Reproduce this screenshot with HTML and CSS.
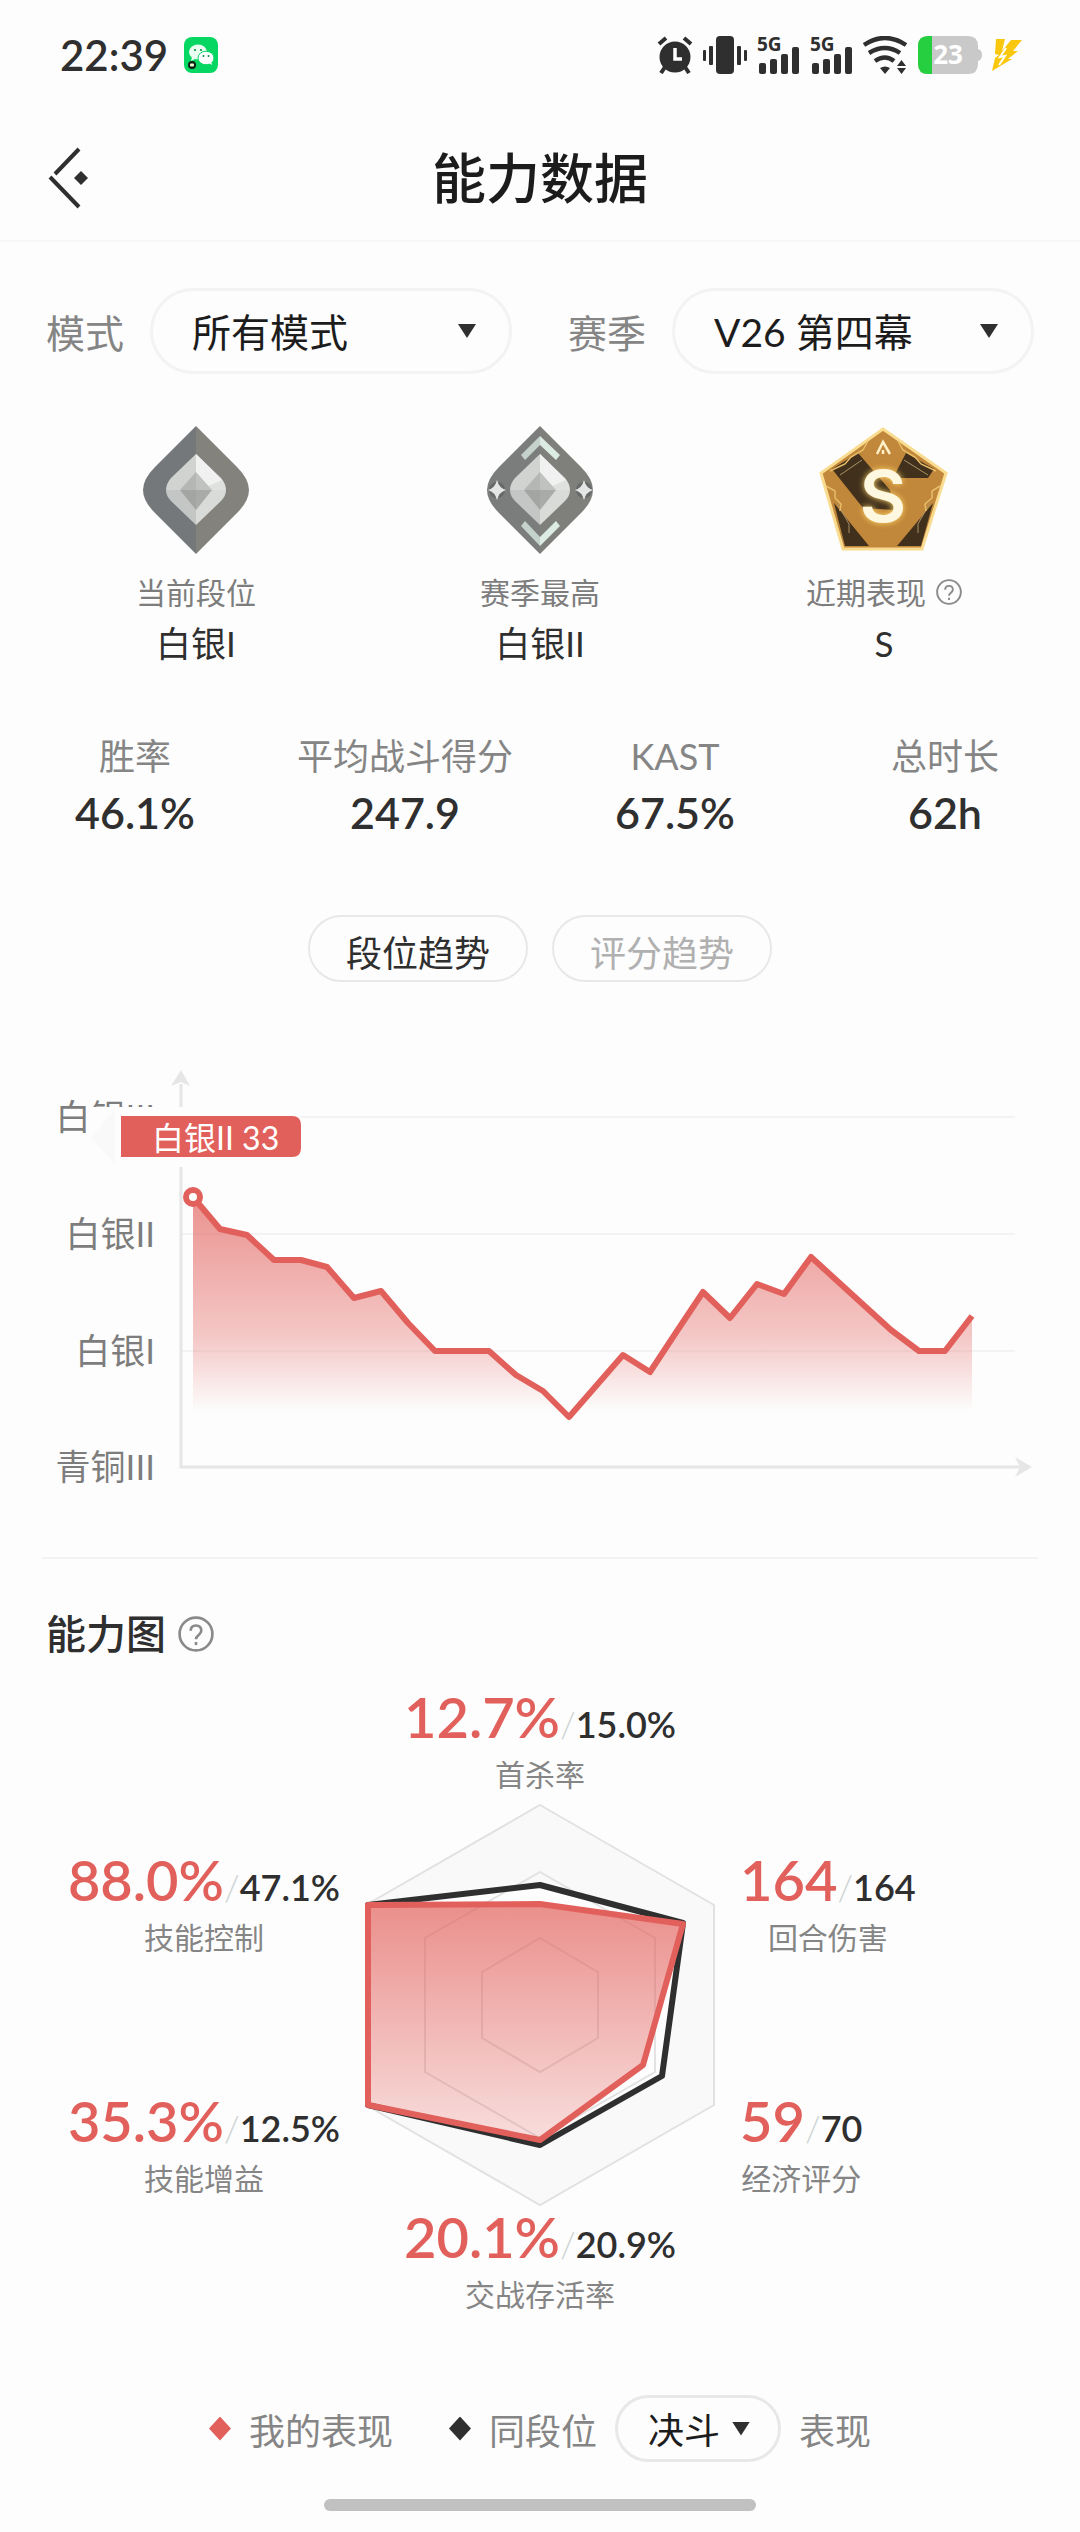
FILE: index.html
```html
<!DOCTYPE html>
<html lang="zh-CN">
<head>
    <meta charset="UTF-8">
    <meta name="viewport" content="width=device-width, initial-scale=1.0">
    <title>能力数据</title>
    <link rel="stylesheet" href="styles.css">
</head>
<body>
    <div class="status-bar">
        <span class="clock">22:39</span>
        <svg class="app-icon" width="34" height="36" viewBox="0 0 34 36">
            <rect width="34" height="36" rx="8" fill="#06d763"/>
            <ellipse cx="14" cy="15" rx="9" ry="7.5" fill="#e9fff2"/>
            <path d="M8 20l-1 4 4-2z" fill="#e9fff2"/>
            <ellipse cx="22" cy="21" rx="8" ry="6.8" fill="#fff" stroke="#06d763"/>
            <path d="M25 26l3 2-1-4z" fill="#fff"/>
            <g fill="#0a8f48">
                <circle cx="11" cy="13" r="1.1"/><circle cx="17" cy="13" r="1.1"/>
                <circle cx="19.5" cy="19" r="1"/><circle cx="24.5" cy="19" r="1"/>
            </g>
            <circle cx="8" cy="28" r="4" fill="#0b1f12"/>
            <rect x="6" y="26.500" width="4" height="3" rx="1" fill="#f4ffd0"/>
        </svg>

        <div class="status-icons">
            <svg width="36" height="38" viewBox="0 0 36 38">
                <g stroke="#2f2f2f" stroke-width="4" fill="none">
                    <path d="M2 8l7-6M34 8l-7-6M8 31l-4 6M28 31l4 6"/>
                </g>
                <circle cx="18" cy="21" r="15.500" fill="#2f2f2f"/>
                <path d="M18 12v11h7" stroke="#fff" stroke-width="3.500" fill="none"/>
            </svg>
            <svg width="44" height="38" viewBox="0 0 44 38" fill="#2f2f2f">
                <rect x="13" y="0" width="18" height="38" rx="4"/>
                <rect x="0" y="14" width="3" height="11" rx="1"/>
                <rect x="6" y="10" width="4" height="19" rx="1"/>
                <rect x="34" y="10" width="4" height="19" rx="1"/>
                <rect x="41" y="14" width="3" height="11" rx="1"/>
            </svg>
            <svg width="43" height="50" viewBox="0 -6 43 50" fill="#2f2f2f">
                <text class="net" x="0" y="15">5G</text>
                <rect x="2" y="27" width="7" height="11" rx="2"/>
                <rect x="13" y="23" width="7" height="15" rx="2"/>
                <rect x="24" y="18" width="7" height="20" rx="2"/>
                <rect x="35" y="11" width="7" height="27" rx="2"/>
            </svg>
            <svg width="43" height="50" viewBox="0 -6 43 50" fill="#2f2f2f">
                <text class="net" x="0" y="15">5G</text>
                <rect x="2" y="27" width="7" height="11" rx="2"/>
                <rect x="13" y="23" width="7" height="15" rx="2"/>
                <rect x="24" y="18" width="7" height="20" rx="2"/>
                <rect x="35" y="11" width="7" height="27" rx="2"/>
            </svg>
            <svg width="45" height="38" viewBox="0 0 45 38">
                <g fill="none" stroke="#2f2f2f" stroke-width="4.500">
                    <path d="M1 9Q22 -5 43 9"/>
                    <path d="M6 17Q22 7 37 17"/>
                    <path d="M12 25Q22 18 31 25"/>
                </g>
                <path d="M17 32q5-3 10 0l-5 6zM34 30l4.500-6 4.500 6zM34 32l4.500 6 4.500-6z" fill="#2f2f2f"/>
            </svg>
            <svg width="64" height="50" viewBox="0 -6 64 50">
                <path d="M10 0H50Q60 0 60 10V13Q64 14 64 19T60 25V28Q60 38 50 38H10Q0 38 0 28V10Q0 0 10 0z" fill="#c9c9c9"/>
                <path d="M14 0H10Q0 0 0 10V28Q0 38 10 38H14z" fill="#25cf3f"/>
                <text class="level" x="30" y="28" text-anchor="middle">23</text>
            </svg>
            <svg width="30" height="34" viewBox="0 0 30 34">
                <path d="M4 1H13L10 13 19 2H30L21 13H26L16 21H20L0 33 3 20 7 17 3 16z" fill="#f9c80e"/>
                <path d="M14 10L8 19L13 18L7 27" stroke="#fff" stroke-width="2" fill="none"/>
            </svg>
        </div>
    </div>

    <header class="header">
        <button class="back" aria-label="返回">
            <svg width="42" height="66" viewBox="0 0 42 66">
                <path d="M31 3L7 28M2 31L31 61" stroke="#2f2f2f" stroke-width="4" fill="none"/>
                <path d="M33 25l7 7-7 7-7-7z" fill="#2f2f2f"/>
            </svg>
        </button>
        <h1>能力数据</h1>
    </header>

    <main>
        <form class="filters">
            <div class="filter">
                <label for="mode">模式</label>
                <div class="select">
                    <select id="mode"><option>所有模式</option></select>
                </div>
            </div>
            <div class="filter">
                <label for="season">赛季</label>
                <div class="select">
                    <select id="season"><option>V26 第四幕</option></select>
                </div>
            </div>
        </form>

        <section class="ranks">
            <div class="rank">
                <svg width="132" height="128" viewBox="-13 0 132 128">
                    <path d="M53 0L12 41Q0 53 0 64T12 87L53 128z" fill="#75787b"/>
                    <path d="M53 0L94 41Q106 53 106 64T94 87L53 128z" fill="#83827d"/>
                    <path d="M53 28L28 52Q23 58 23 64H53z" fill="#d1d3d1"/>
                    <path d="M53 28L78 52Q83 58 83 64H53z" fill="#dfe1df"/>
                    <path d="M53 28L79 54 65 60 53 48z" fill="#f0f1f0"/>
                    <path d="M53 99L28 75Q23 70 23 64H53z" fill="#c3c6c4"/>
                    <path d="M53 99L78 75Q83 70 83 64H53z" fill="#d8dbd8"/>
                    <path d="M53 46L37 64H53z" fill="#b5b7b5"/>
                    <path d="M53 46L69 64H53z" fill="#c0c2c0"/>
                    <path d="M53 84L37 64H53z" fill="#a3a5a3"/>
                    <path d="M53 84L69 64H53z" fill="#a9aba9"/>
                </svg>
                <span class="rank-label">当前段位</span>
                <strong>白银I</strong>
            </div>
            <div class="rank">
                <svg width="132" height="128" viewBox="-13 0 132 128">
                    <path d="M53 0L12 41Q0 53 0 64T12 87L53 128z" fill="#7b7d7d"/>
                    <path d="M53 0L94 41Q106 53 106 64T94 87L53 128z" fill="#7f7f7b"/>
                    <path d="M53 28L28 52Q23 58 23 64H53z" fill="#d1d3d1"/>
                    <path d="M53 28L78 52Q83 58 83 64H53z" fill="#dfe1df"/>
                    <path d="M53 28L79 54 65 60 53 48z" fill="#f0f1f0"/>
                    <path d="M53 99L28 75Q23 70 23 64H53z" fill="#c3c6c4"/>
                    <path d="M53 99L78 75Q83 70 83 64H53z" fill="#d8dbd8"/>
                    <path d="M53 46L37 64H53z" fill="#b5b7b5"/>
                    <path d="M53 46L69 64H53z" fill="#c0c2c0"/>
                    <path d="M53 84L37 64H53z" fill="#a3a5a3"/>
                    <path d="M53 84L69 64H53z" fill="#a9aba9"/>
                    <path d="M53 10L34 29 38 34 53 19zM53 120L34 100 38 95 53 111z" fill="#c5d2cc"/>
                    <path d="M53 10L73 29 69 34 53 19zM53 120L73 100 69 95 53 111z" fill="#dcece4"/>
                    <circle cx="10" cy="64" r="8" fill="#666968"/>
                    <circle cx="97" cy="64" r="8" fill="#666968"/>
                    <path d="M10 54Q12 62 19 64 12 66 10 74 8 66 1 64 8 62 10 54zM97 54Q99 62 106 64 99 66 97 74 95 66 88 64 95 62 97 54z" fill="#e4e6e5"/>
                </svg>
                <span class="rank-label">赛季最高</span>
                <strong>白银II</strong>
            </div>
            <div class="rank">
                <svg width="132" height="128" viewBox="0 0 132 128">
                    <path d="M65 3L128 47 104 123H25L3 47z" fill="#c1873a" stroke="#f9dc90" stroke-width="3"/>
                    <path d="M40 27L14 43 45 82 76 84 72 64z" fill="#41301c"/>
                    <path d="M88 27L116 43 110 52 75 52zM16 77L51 120H27zM115 77L79 120H103z" fill="#41301c"/>
                    <path d="M22 49L44 34M86 34L110 49M19 77l12 21v9M112 77l-12 21v9" stroke="#a99268" stroke-width="1" fill="none"/>
                    <path d="M50 15l-5 9-12 7-6 7-15 7M80 15l5 9 12 7 6 7 15 7M8 60l9 5v7l6 6-1 7M122 60l-8 5v7l-7 6 1 7" stroke="#e8bd68" stroke-width="1.500" fill="none"/>
                    <path d="M59 28l6-12 7 12M65 24v4" stroke="#fff0c7" stroke-width="2.500" fill="none"/>
                    <text class="grade" x="65" y="96" text-anchor="middle">S</text>
                </svg>
                <span class="rank-label">近期表现
                    <button class="help" aria-label="说明">
                        <svg width="26" height="26" viewBox="0 0 34 34"><use href="#help-icon"/></svg>
                    </button>
                </span>
                <strong>S</strong>
            </div>
        </section>

        <dl class="stats">
            <div><dt>胜率</dt><dd>46.1%</dd></div>
            <div><dt>平均战斗得分</dt><dd>247.9</dd></div>
            <div><dt>KAST</dt><dd>67.5%</dd></div>
            <div><dt>总时长</dt><dd>62h</dd></div>
        </dl>

        <div class="tabs">
            <button class="tab active">段位趋势</button>
            <button class="tab">评分趋势</button>
        </div>

        <!-- Rank trend -->
        <svg class="trend" viewBox="0 0 1080 430">
            <defs>
                <linearGradient id="trend-fill" gradientUnits="userSpaceOnUse" x1="0" y1="137" x2="0" y2="352">
                    <stop offset="0" stop-color="#e2605b" stop-opacity=".68"/>
                    <stop offset=".65" stop-color="#e2605b" stop-opacity=".34"/>
                    <stop offset="1" stop-color="#e2605b" stop-opacity="0"/>
                </linearGradient>
            </defs>
            <path d="M182 57H1015M182 174H1015M182 291H1015" stroke="#f3f3f3" stroke-width="2"/>
            <path d="M181 24V407H1020" stroke="#e6e6e6" stroke-width="3" fill="none"/>
            <path d="M181 10l9 16-9-4-10 4zM1032 407l-17 10 5-10-5-10z" fill="#e6e6e6"/>
            <g class="axis-label" text-anchor="end">
                <text x="155" y="70">白银III</text>
                <text x="155" y="187">白银II</text>
                <text x="155" y="304">白银I</text>
                <text x="155" y="420">青铜III</text>
            </g>
            <path d="M193 137L220 169 247 175 274 200H301L327 207 354 238 381 231 408 263 435 291H489L516 315 543 331 569 357 623 295 650 312 677 271 703 232 730 258 757 224 784 234 811 197 891 270 919 291H945L972 256V352H193z" fill="url(#trend-fill)"/>
            <path d="M193 137L220 169 247 175 274 200H301L327 207 354 238 381 231 408 263 435 291H489L516 315 543 331 569 357 623 295 650 312 677 271 703 232 730 258 757 224 784 234 811 197 891 270 919 291H945L972 256" fill="none" stroke="#e2605b" stroke-width="6" stroke-linejoin="round"/>
            <circle cx="193" cy="137" r="7" fill="#fff" stroke="#e2605b" stroke-width="6"/>
            <path d="M88 47H300V107H88z" fill="#fdfdfd"/>
            <path d="M91 77L115 50V104z" fill="#f9f9f9"/>
            <path d="M121 56H292Q301 56 301 65V88Q301 97 292 97H121z" fill="#e2605b"/>
            <text class="tip" x="152" y="90">白银II 33</text>
        </svg>

        <section class="ability">
            <h2>能力图
                <button class="help" aria-label="说明">
                    <svg width="36" height="36" viewBox="0 0 34 34">
                        <g id="help-icon" fill="none" stroke="#8a8a8a" stroke-width="2.500">
                            <circle cx="17" cy="17" r="15.500"/>
                            <path d="M12 14Q12 9 17 9T22 14Q22 16 19.500 18T17 22"/>
                            <path d="M17 24.500V27.500"/>
                        </g>
                    </svg>
                </button>
            </h2>

            <div class="radar">
                <div class="metric metric-top">
                    <p><b>12.7%</b><i>/</i>15.0%</p>
                    <span>首杀率</span>
                </div>
                <div class="side side-left">
                    <div class="metric">
                        <p><b>88.0%</b><i>/</i>47.1%</p>
                        <span>技能控制</span>
                    </div>
                    <div class="metric">
                        <p><b>35.3%</b><i>/</i>12.5%</p>
                        <span>技能增益</span>
                    </div>
                </div>
                <svg class="hexagon" width="352" height="404" viewBox="-176 -202 352 404">
                    <defs>
                        <linearGradient id="radar-fill" x1="0" y1="0" x2="0" y2="1">
                            <stop offset="0" stop-color="#e2605b" stop-opacity=".7"/>
                            <stop offset="1" stop-color="#e2605b" stop-opacity=".2"/>
                        </linearGradient>
                    </defs>
                    <path d="M0 -200L174 -100V100L0 200 -174 100V-100z" fill="#f9f9f9"/>
                    <path d="M0 -120L143 -82 122 71 0 140 -172 100V-100z" fill="#fdfdfd"/>
                    <path d="M0 -200L174 -100V100L0 200 -174 100V-100zM0 -133L115 -67V67L0 133 -115 67V-67zM0 -67L58 -33V33L0 67 -58 33V-33z" fill="none" stroke="#e2e2e2" stroke-width="2"/>
                    <path d="M0 -120L143 -82 122 71 0 140 -172 100V-100z" fill="none" stroke="#2f2f2f" stroke-width="6" stroke-linejoin="round"/>
                    <path d="M0 -101L143 -81 103 60 0 135 -172 100V-100z" fill="url(#radar-fill)" stroke="#e2605b" stroke-width="6" stroke-linejoin="round"/>
                </svg>
                <div class="side side-right">
                    <div class="metric">
                        <p><b>164</b><i>/</i>164</p>
                        <span>回合伤害</span>
                    </div>
                    <div class="metric">
                        <p><b>59</b><i>/</i>70</p>
                        <span>经济评分</span>
                    </div>
                </div>
                <div class="metric metric-bottom">
                    <p><b>20.1%</b><i>/</i>20.9%</p>
                    <span>交战存活率</span>
                </div>
            </div>

            <div class="legend">
                <span class="dot mine"></span>
                <span class="legend-mine">我的表现</span>
                <span class="dot"></span>
                <label for="role">同段位</label>
                <div class="select small">
                    <select id="role"><option>决斗</option></select>
                </div>
                <span>表现</span>
            </div>
        </section>
    </main>

    <div class="home-bar"></div>
</body>
</html>
```
FILE: styles.css
```css
* {
    margin: 0;
    padding: 0;
    box-sizing: border-box;
}

body {
    font-family: Lato, 'Noto Sans CJK SC', sans-serif;
    background: #fdfdfd;
    color: #2f2f2f;
    min-height: 100vh;
}

svg {
    display: block;
    flex: none;
}

button {
    font: inherit;
    background: none;
    border: none;
    cursor: pointer;
}

/* Status bar */
.status-bar {
    display: flex;
    align-items: center;
    height: 110px;
    padding: 0 58px 0 60px;
}

.clock {
    font-size: 42px;
    font-weight: 600;
    margin-right: 16px;
}

.status-icons {
    display: flex;
    align-items: center;
    gap: 10px;
    margin-left: auto;
}

.net {
    font: bold 19px 'Noto Sans', sans-serif;
}

.level {
    font: bold 26px 'Noto Sans', sans-serif;
    fill: #fff;
}

/* Header */
.header {
    display: grid;
    grid-template-columns: 1fr auto 1fr;
    align-items: center;
    height: 132px;
    padding: 8px 48px 0;
    border-bottom: 2px solid #f8f8f8;
}

.back {
    justify-self: start;
}

h1 {
    font-size: 54px;
    font-weight: 500;
    line-height: 80px;
    color: #1c1c1c;
}

/* Filters */
.filters {
    display: flex;
    gap: 56px;
    padding: 46px 46px 0;
}

.filter {
    display: flex;
    align-items: center;
    gap: 26px;
    flex: 1;
    font-size: 39px;
    color: #858585;
}

.filter label {
    flex: none;
}

.select {
    position: relative;
    flex: 1;
}

.select::after {
    content: '';
    position: absolute;
    top: 50%;
    right: 36px;
    width: 18px;
    height: 14px;
    margin-top: -7px;
    background: #2f2f2f;
    clip-path: polygon(0 0, 100% 0, 50% 100%);
    pointer-events: none;
}

select {
    appearance: none;
    width: 100%;
    height: 86px;
    padding: 2px 39px 0;
    border: 3px solid #f3f3f3;
    border-radius: 43px;
    background: none;
    font: inherit;
    color: #1c1c1c;
}

/* Ranks */
.ranks {
    display: grid;
    grid-template-columns: repeat(3, 1fr);
    padding: 52px 24px 0;
}

.rank {
    display: flex;
    flex-direction: column;
    align-items: center;
}

.rank-label {
    display: flex;
    align-items: center;
    gap: 10px;
    margin-top: 18px;
    font-size: 30px;
    line-height: 40px;
    color: #7d7d7d;
}

.rank strong {
    margin-top: 5px;
    font-size: 35px;
    font-weight: 400;
    line-height: 52px;
}

.grade {
    font: 600 72px Inter, sans-serif;
    fill: #fff8e0;
    filter: drop-shadow(0 0 3px #ffd86b);
}

/* Stats */
.stats {
    display: grid;
    grid-template-columns: repeat(4, 1fr);
    margin-top: 63px;
    text-align: center;
}

.stats dt {
    font-size: 36px;
    line-height: 48px;
    color: #858585;
}

.stats dd {
    margin-top: 5px;
    font-size: 43px;
    font-weight: 600;
    line-height: 56px;
}

/* Tabs */
.tabs {
    display: flex;
    justify-content: center;
    gap: 24px;
    margin-top: 74px;
}

.tab {
    height: 67px;
    padding: 4px 36px 0;
    border: 2px solid #e8e8e8;
    border-radius: 34px;
    font-size: 36px;
    color: #b0b0b0;
}

.tab.active {
    color: #2f2f2f;
}

/* Trend chart */
.trend {
    width: 100%;
    height: auto;
    margin-top: 78px;
}

.axis-label {
    font-size: 35px;
    fill: #7d7d7d;
}

.tip {
    font-size: 32px;
    fill: #fff;
}

/* Ability radar */
.ability {
    margin: 67px 42px 0;
    border-top: 2px solid #f3f3f3;
}

h2 {
    display: flex;
    align-items: center;
    gap: 12px;
    padding: 45px 4px 0;
    font-size: 40px;
    font-weight: 500;
    line-height: 60px;
}

.radar {
    display: grid;
    grid-template-columns: 1fr auto 1fr;
    grid-template-areas:
        ". top ."
        "left hex right"
        ". bottom .";
    column-gap: 24px;
    margin-top: 23px;
}

.metric {
    display: flex;
    flex-direction: column;
    align-items: center;
    height: 110px;
}

.metric p {
    font-size: 36px;
    font-weight: 600;
    line-height: 60px;
    white-space: nowrap;
}

.metric b {
    font-size: 56px;
    font-weight: 600;
    color: #e2605b;
}

.metric i {
    font-style: normal;
    font-weight: 300;
    color: #ccd2d2;
}

.metric span {
    font-size: 30px;
    line-height: 40px;
    color: #858585;
}

.metric-top {
    grid-area: top;
    margin-bottom: 6px;
}

.metric-bottom {
    grid-area: bottom;
}

.hexagon {
    grid-area: hex;
}

.side {
    display: flex;
    flex-direction: column;
    justify-content: space-between;
    padding: 47px 0 6px;
}

.side-left {
    grid-area: left;
    align-items: flex-end;
}

.side-right {
    grid-area: right;
    align-items: flex-start;
}

/* Legend */
.legend {
    display: flex;
    align-items: center;
    justify-content: center;
    gap: 18px;
    margin-top: 78px;
    font-size: 36px;
    color: #858585;
}

.dot {
    width: 22px;
    height: 24px;
    background: #2f2f2f;
    clip-path: polygon(50% 0, 100% 50%, 50% 100%, 0 50%);
}

.dot.mine {
    background: #e2605b;
}

.legend-mine {
    margin-right: 38px;
}

.select.small {
    flex: none;
}

.small select {
    width: 166px;
    height: 67px;
    padding: 2px 30px 0;
    border-color: #e8e8e8;
    border-radius: 34px;
}

.small::after {
    right: 31px;
}

.home-bar {
    width: 40%;
    height: 12px;
    margin: 37px auto 20px;
    border-radius: 6px;
    background: #c1c1c1;
}
```
